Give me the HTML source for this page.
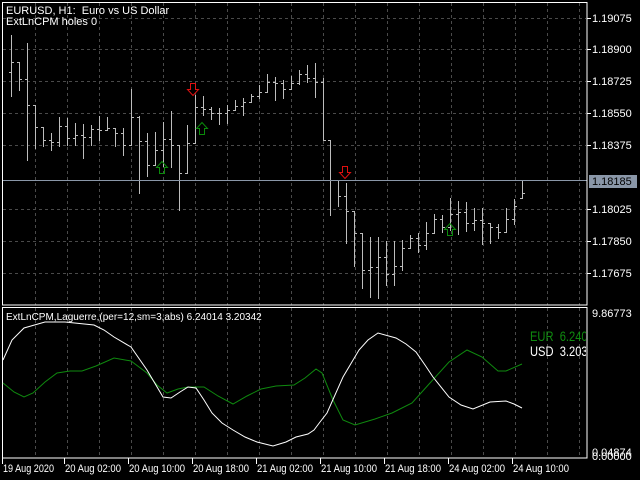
<!DOCTYPE html>
<html><head><meta charset="utf-8"><style>
body{margin:0;background:#000;width:640px;height:480px;overflow:hidden;font-family:"Liberation Sans",sans-serif}
svg{position:absolute;left:0;top:0}
</style></head><body>
<svg id="s" width="640" height="480" xmlns="http://www.w3.org/2000/svg">
<rect width="640" height="480" fill="#000"/>
<g id="grid" stroke="#4a4a4a" stroke-dasharray="3,3" stroke-width="1"></g>
<g id="bars" stroke="#bdbdbd" stroke-width="1"></g>
<line x1="2" y1="180.5" x2="587" y2="180.5" stroke="#8a97a8"/>
<g fill="none" stroke-width="1">
<polygon points="190.5,83.5 195.5,83.5 195.5,89.5 198.5,89.5 193,95.5 187.5,89.5 190.5,89.5" stroke="#e01010"/>
<polygon points="342.5,166.5 347.5,166.5 347.5,172.5 350.5,172.5 345,178.5 339.5,172.5 342.5,172.5" stroke="#e01010"/>
<polygon points="159.5,173.5 164.5,173.5 164.5,167.5 167.5,167.5 162,161.5 156.5,167.5 159.5,167.5" stroke="#0a8a0a"/>
<polygon points="199.5,134.5 204.5,134.5 204.5,128.5 207.5,128.5 202,122.5 196.5,128.5 199.5,128.5" stroke="#0a8a0a"/>
<polygon points="447.5,235.5 452.5,235.5 452.5,229.5 455.5,229.5 450,223.5 444.5,229.5 447.5,229.5" stroke="#0a8a0a"/>
</g>
<g fill="none" stroke="#fff" stroke-width="1">
<rect x="2.5" y="2.5" width="584.5" height="302.5"/>
<rect x="2.5" y="307.5" width="584.5" height="150.5"/>
</g>
<polyline fill="none" stroke="#0f8a0f" stroke-width="1" points="3,383 14,392 24,397 33,393 45,382 57,373 70,371 82,371 96,366 114,358 131,361 147,373 157,385 167,393 178,389 188,387 204,387 218,396 233,404 247,396 261,389 276,386 294,385 305,378 316,369 322,373 333,400 343,420 355,425 375,419 392,413 412,403 430,383 449,362 467,350 482,357 498,371 506,371 522,364"/>
<polyline fill="none" stroke="#fff" stroke-width="1" points="3,360 12,340 24,328 45,322 65,322 94,325 104,330 114,337 131,347 147,370 163,397 171,398 180,392 188,387 196,388 204,400 212,413 222,423 233,430 245,437 257,442 273,446 286,442 296,437 308,434 314,430 320,422 327,413 343,377 359,350 368,340 378,333 396,338 406,344 416,352 425,365 433,377 449,397 461,405 473,409 490,402 506,401 514,404 522,408"/>
<g font-size="11" fill="#fff">
<text x="6" y="14">EURUSD, H1:&#160; Euro vs US Dollar</text>
<text x="6" y="25">ExtLnCPM holes 0</text>
<text x="6" y="320" font-size="10">ExtLnCPM,Laguerre,(per=12,sm=3,abs) 6.24014 3.20342</text>
</g>
<svg x="0" y="0" width="586" height="480" overflow="hidden">
<text x="530" y="341" font-size="14" fill="#0f8a0f" textLength="70" lengthAdjust="spacingAndGlyphs">EUR&#160; 6.24014</text>
<text x="530" y="356" font-size="14" fill="#fff" textLength="70" lengthAdjust="spacingAndGlyphs">USD&#160; 3.20342</text>
</svg>
<g id="axis" font-size="11" fill="#fff" stroke="none"></g>
<rect x="589" y="175" width="48" height="13" fill="#8a97a8"/>
<text x="592" y="185" font-size="11" fill="#000">1.18185</text>
</svg>
<script>
var ns="http://www.w3.org/2000/svg";
function el(p,t,a,txt){var e=document.createElementNS(ns,t);for(var k in a)e.setAttribute(k,a[k]);if(txt)e.textContent=txt;document.getElementById(p).appendChild(e);}
var g="grid";
var hy=[18,49,81,113,145,209,241,273];
hy.forEach(function(y){el(g,"line",{x1:3,x2:586,y1:y+.5,y2:y+.5});});
for(var x=35;x<586;x+=32){el(g,"line",{x1:x+.5,x2:x+.5,y1:3,y2:305});el(g,"line",{x1:x+.5,x2:x+.5,y1:308,y2:458});}
var labs=["1.19075","1.18900","1.18725","1.18550","1.18375","1.18025","1.17850","1.17675"];
hy.forEach(function(y,i){el("axis","line",{x1:587,x2:591,y1:y+.5,y2:y+.5,stroke:"#fff"});el("axis","text",{x:592,y:y+4},labs[i]);});
el("axis","text",{x:592,y:317},"9.86773");
el("axis","text",{x:592,y:456},"0.04874");
el("axis","text",{x:592,y:460},"0.00000");
var d=[["19 Aug 2020",3],["20 Aug 02:00",65],["20 Aug 10:00",129],["20 Aug 18:00",193],["21 Aug 02:00",257],["21 Aug 10:00",321],["21 Aug 18:00",385],["24 Aug 02:00",449],["24 Aug 10:00",513]];
d.forEach(function(a,i){el("axis","line",{x1:a[1]-.5,x2:a[1]-.5,y1:458,y2:464,stroke:"#fff"});el("axis","text",{x:a[1],y:472,textLength:(i==0?51:56),lengthAdjust:"spacingAndGlyphs"},a[0]);});
var b=[[35,96],[62,90],[43,160],[105,148],[127,146],[133,150],[117,146],[118,145],[123,145],[124,158],[125,145],[116,140],[117,130],[128,146],[128,155],[89,145],[116,193],[133,176],[132,165],[122,166],[111,167],[145,210],[125,173],[95,143],[96,115],[107,119],[108,124],[105,123],[100,110],[98,115],[94,102],[85,98],[74,92],[77,100],[80,98],[76,89],[70,84],[65,82],[63,97],[78,140],[140,215],[180,206],[183,243],[211,266],[233,288],[237,297],[237,298],[241,285],[241,285],[240,270],[235,248],[233,252],[222,249],[214,233],[215,232],[198,230],[201,234],[202,231],[208,230],[208,244],[223,243],[224,238],[208,232],[199,224],[181,198]];
var prev=72;
b.forEach(function(v,i){var x=11+i*8-(i>39?1:0);var h=v[0],l=v[1];
var o=Math.min(Math.max(prev,h),l);var c=Math.round(h+(l-h)*((i*37%10)/10*0.6+0.2));
if(i<b.length-1){var n=b[i+1];var lo=Math.max(h,n[0]),hi=Math.min(l,n[1]);if(hi>=lo)c=Math.min(Math.max(c,lo),hi);}
el("bars","line",{x1:x+.5,x2:x+.5,y1:h,y2:l+1});
el("bars","line",{x1:x-2,x2:x,y1:o+.5,y2:o+.5});
el("bars","line",{x1:x+1,x2:x+3,y1:c+.5,y2:c+.5});prev=c;});
</script>
</body></html>
